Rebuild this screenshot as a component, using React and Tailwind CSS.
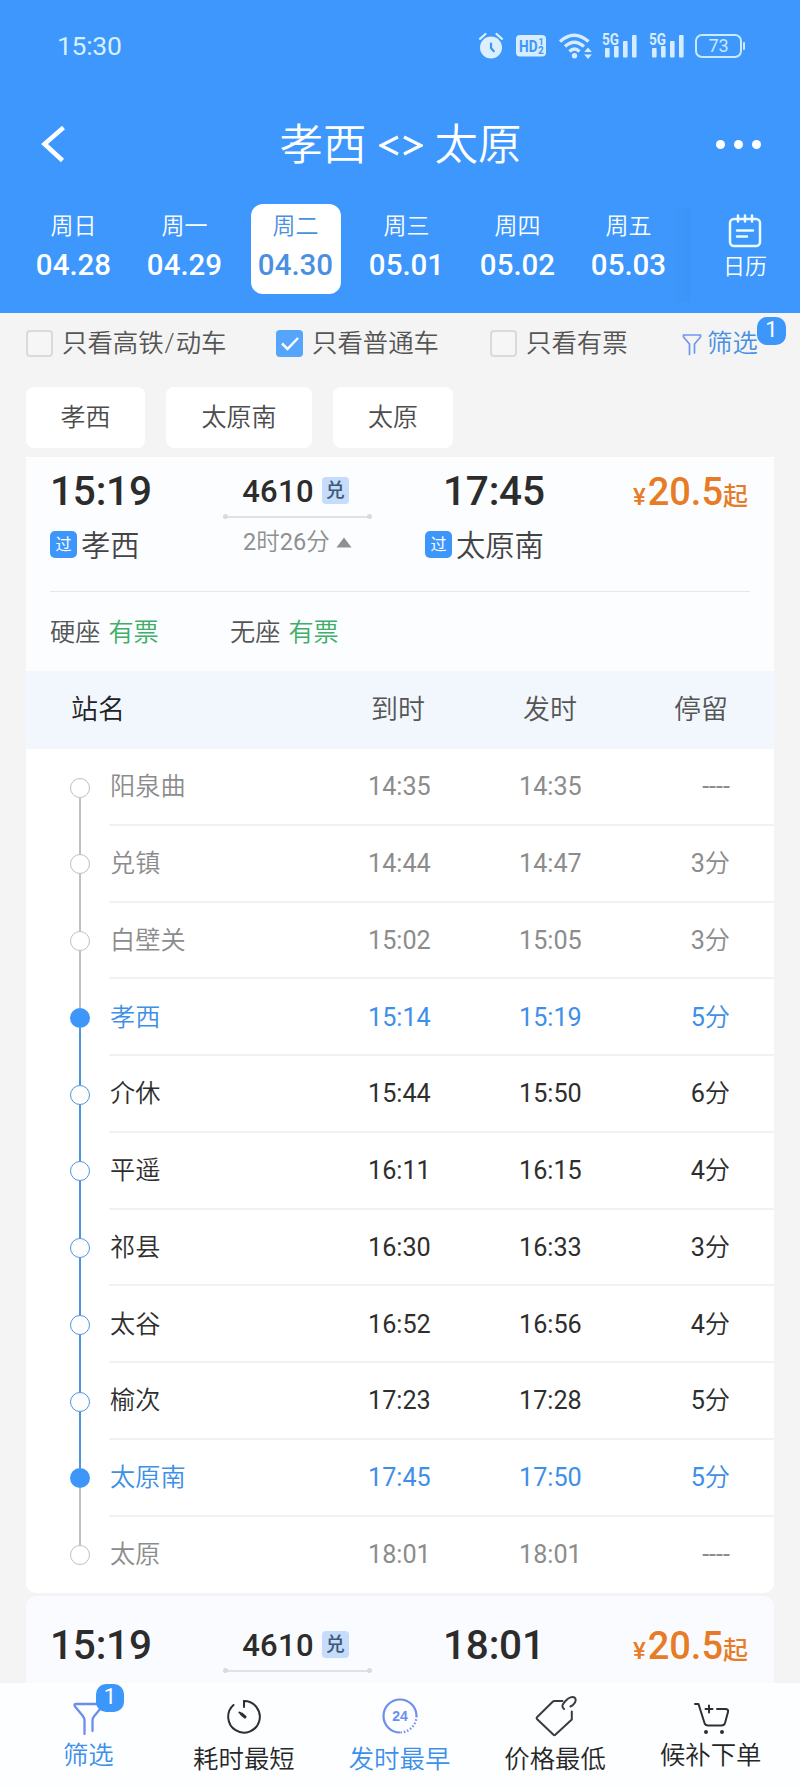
import clsx from 'clsx';

const days = [
  { week: '周日', date: '04.28' },
  { week: '周一', date: '04.29' },
  { week: '周二', date: '04.30', active: true },
  { week: '周三', date: '05.01' },
  { week: '周四', date: '05.02' },
  { week: '周五', date: '05.03' },
];

const stops = [
  { name: '阳泉曲', arrive: '14:35', depart: '14:35', stay: '----', state: 'out' },
  { name: '兑镇', arrive: '14:44', depart: '14:47', stay: '3分', state: 'out' },
  { name: '白壁关', arrive: '15:02', depart: '15:05', stay: '3分', state: 'out' },
  { name: '孝西', arrive: '15:14', depart: '15:19', stay: '5分', state: 'end' },
  { name: '介休', arrive: '15:44', depart: '15:50', stay: '6分', state: 'mid' },
  { name: '平遥', arrive: '16:11', depart: '16:15', stay: '4分', state: 'mid' },
  { name: '祁县', arrive: '16:30', depart: '16:33', stay: '3分', state: 'mid' },
  { name: '太谷', arrive: '16:52', depart: '16:56', stay: '4分', state: 'mid' },
  { name: '榆次', arrive: '17:23', depart: '17:28', stay: '5分', state: 'mid' },
  { name: '太原南', arrive: '17:45', depart: '17:50', stay: '5分', state: 'end' },
  { name: '太原', arrive: '18:01', depart: '18:01', stay: '----', state: 'out' },
];

const Signal = () => (
  <svg width="36" height="38" viewBox="0 -6 36 38" fill="#d6edff">
    <text x="0" y="12" fontSize="16" fontWeight="700" fontFamily="Roboto" textLength="17" lengthAdjust="spacingAndGlyphs">5G</text>
    <rect x="3" y="15" width="4.6" height="9.5" rx="1" />
    <rect x="12" y="13" width="4.6" height="11.5" rx="1" />
    <rect x="21" y="8" width="4.6" height="16.5" rx="1" />
    <rect x="30" y="2" width="4.6" height="22.5" rx="1" />
  </svg>
);

const StatusBar = () => (
  <div className="flex h-[92px] items-center pl-[57px] pr-[55px]">
    <span className="flex-1 text-[26.5px] leading-none tracking-[-0.3px] text-[#d6f0ff]">15:30</span>
    <svg width="26" height="28" viewBox="0 0 26 28" fill="none">
      <circle cx="13" cy="15.5" r="11" fill="#dcefff" />
      <path d="M2 6.8 7.5 2M24 6.8 18.5 2" stroke="#dcefff" strokeWidth="2.2" strokeLinecap="round" />
      <path d="M13 11.5v4.5l2.8 3.2" stroke="#3d97fb" strokeWidth="2.2" strokeLinecap="round" strokeLinejoin="round" />
    </svg>
    <svg className="ml-[12px]" width="30" height="22" viewBox="0 0 30 22">
      <rect width="30" height="21.5" rx="4" fill="#d6edff" />
      <text x="3" y="16.5" fontSize="16.5" fontWeight="700" fontFamily="Roboto" fill="#3d97fb" textLength="18.5" lengthAdjust="spacingAndGlyphs">HD</text>
      <text x="22.5" y="10" fontSize="9" fontWeight="700" fontFamily="Roboto" fill="#3d97fb">1</text>
      <text x="22" y="18.8" fontSize="10" fontWeight="700" fontFamily="Roboto" fill="#3d97fb">2</text>
    </svg>
    <svg className="ml-[13px]" width="34" height="27" viewBox="0 0 34 27" fill="none" stroke="#d6edff" strokeWidth="3.3">
      <path d="M1 8.500Q15 -4 29.500 8.500" />
      <path d="M6 13.500Q15 5 25 13.500" />
      <path d="M10.500 18.500Q15.500 13.500 20.500 18.500" />
      <circle cx="15.5" cy="22.8" r="2.7" fill="#d6edff" stroke="none" />
      <path d="m29 14.500 3.800 4.500h-7.600zM29 26l3.800-4.500h-7.600z" fill="#d6edff" stroke="none" />
    </svg>
    <div className="ml-[9px] flex gap-[11px]">
      <Signal />
      <Signal />
    </div>
    <div className="ml-[10px] flex h-[24px] w-[47px] items-center justify-center rounded-[7px] border-2 border-[#c9eaff] text-[18px] leading-none text-[#c9eaff]">73</div>
    <span className="ml-[1px] h-[8px] w-[2px] rounded-full bg-[#c9eaff]" />
  </div>
);

const Header = () => (
  <header className="h-[313px] bg-[#3d97fc] text-white">
    <StatusBar />
    <div className="flex h-[106px] items-center pl-[41px] pr-[39px]">
      <svg width="26" height="38" viewBox="0 0 26 38" fill="none" stroke="white" strokeWidth="4.5">
        <path d="M22.500 1.500 3.500 18l18 16.500" />
      </svg>
      <h1 className="flex flex-1 items-center justify-center gap-[12px] pl-[18px] pt-[2px] text-[43.5px] font-[350] leading-none">
        <span>孝西</span>
        <svg width="44" height="22" viewBox="0 0 44 22" fill="none" stroke="white" strokeWidth="3.2">
          <path d="M19 2 2 10.500 19 19M25 2l17 8.500L25 19" />
        </svg>
        <span>太原</span>
      </h1>
      <div className="flex gap-[9px] pb-[2px]">
        <i className="size-[9px] rounded-full bg-white" />
        <i className="size-[9px] rounded-full bg-white" />
        <i className="size-[9px] rounded-full bg-white" />
      </div>
    </div>
    <div className="flex h-[115px] pl-[18px]">
      {days.map((d) => (
        <div key={d.date} className="flex w-[111px] justify-center pt-[6px]">
          <div className={clsx('flex h-[90px] w-[90px] flex-col items-center rounded-[12px] pt-[10px]', d.active && 'bg-white text-[#4a90e2]')}>
            <span className="text-[23px] font-[350] leading-[26px]">{d.week}</span>
            <span className="mt-[9px] text-[29.5px] font-medium leading-[32px]">{d.date}</span>
          </div>
        </div>
      ))}
      <div className="-ml-[10px] mt-[10px] h-[94px] w-[16px] bg-gradient-to-r from-[#3d97fc] to-[#3c94f7]" />
      <div className="flex flex-1 flex-col items-center pt-[16px]">
        <svg className="shrink-0" width="34" height="34" viewBox="0 0 34 34" fill="none" stroke="#ecfcff" strokeWidth="2.5" strokeLinecap="round">
          <rect x="2" y="5" width="30" height="27" rx="4" />
          <path d="M10 1.500v6M17 1.500v6M24 1.500v6M9 16.500h16M9 22.500h10" />
        </svg>
        <span className="mt-[6px] text-[22px] font-[350] leading-[26px]">日历</span>
      </div>
    </div>
  </header>
);

const Check = ({ checked }) => (
  <span className={clsx('-mt-[1px] flex size-[27px] shrink-0 items-center justify-center rounded-[4px]', checked ? 'bg-[#54a5fb]' : 'border-2 border-[#dadada] bg-[#f6f6f6]')}>
    {checked && (
      <svg width="20" height="16" viewBox="0 0 20 16" fill="none" stroke="white" strokeWidth="2.5">
        <path d="m2 7.500 5.500 5.500L18 2" />
      </svg>
    )}
  </span>
);

const Filters = () => (
  <div className="relative flex h-[60px] items-center pl-[26px] pt-[2px] text-[25.4px] font-[350] leading-none text-[#555]">
    <div className="flex w-[250px] items-center gap-[9px]">
      <Check />
      <span>只看高铁<span className="px-[1px]">/</span>动车</span>
    </div>
    <div className="flex w-[214px] items-center gap-[9px]"><Check checked />只看普通车</div>
    <div className="flex w-[192px] items-center gap-[9px]"><Check />只看有票</div>
    <div className="flex items-center gap-[5px] text-[#4a90e2]">
      <svg width="20" height="23" viewBox="0 0 20 23" fill="none" stroke="#6f96ee" strokeWidth="1.7" strokeLinecap="round">
        <path d="M7.500 21.500V11L1.500 4V2h17v2l-6 7v9" />
      </svg>
      筛选
    </div>
    <span className="absolute left-[757px] top-[4px] flex h-[28px] w-[29px] items-center justify-center rounded-[10px] bg-[#3d97fb] pb-[2px] text-[22px] font-normal text-white">1</span>
  </div>
);

const Tag = () => (
  <span className="-mt-[3px] flex size-[27px] shrink-0 items-center justify-center rounded-[5px] bg-[#3d97fb] text-[16px] font-normal leading-none text-white">过</span>
);

const Summary = ({ depart, arrive }) => (
  <div className="flex h-[62px] pl-[24px] pr-[26px] font-medium text-[#2c2c2c]">
    <span className="w-[171px] pt-[10px] text-[40.5px] leading-[48px] tracking-[-0.2px]">{depart}</span>
    <div className="flex w-[152px] flex-col items-center">
      <div className="flex h-[58px] items-center gap-[8px] pr-[3px] pt-[9px]">
        <span className="pt-[3px] text-[31px] leading-none tracking-[0.3px]">4610</span>
        <span className="flex size-[27px] items-center justify-center rounded-[4px] bg-[#c5dcfb] text-[19px] leading-none text-[#3e5878]">兑</span>
      </div>
      <div className="flex w-[149px] shrink-0 items-center">
        <i className="size-[5px] rounded-full bg-[#d8dadd]" />
        <i className="h-[2px] flex-1 bg-[#dfe1e4]" />
        <i className="size-[5px] rounded-full bg-[#d8dadd]" />
      </div>
    </div>
    <span className="flex-1 pl-[70px] pt-[10px] text-[40.5px] leading-[48px] tracking-[-0.2px]">{arrive}</span>
    <div className="flex items-baseline pt-[11px] text-[38px] leading-[48px] text-[#e87b25]">
      <span className="pr-[2px] text-[24px]">¥</span>20.5<span className="text-[25px]">起</span>
    </div>
  </div>
);

const tone = { out: 'text-[#8c8c8c]', end: 'text-[#3d8fe8]', mid: 'text-[#2e2e2e]' };

const Stop = ({ stop, index }) => {
  const last = index === stops.length - 1;
  const onRoute = index >= 3 && index < 9;
  const cameFromRoute = index > 3 && index <= 9;
  return (
    <div className={clsx('flex h-[76.75px] text-[25.2px] leading-none', tone[stop.state])}>
      <div className="flex w-[83px] flex-col items-center pl-[25px]">
        <i className={clsx('h-[28.5px] w-[2px] shrink-0', index === 0 ? 'bg-transparent' : cameFromRoute ? 'bg-[#4b96df]' : 'bg-[#bfbfbf]')} />
        <i
          className={clsx(
            'size-[20px] shrink-0 rounded-full',
            stop.state === 'end' && 'bg-[#3d97fb]',
            stop.state === 'mid' && 'border-[1.5px] border-[#4b96df] bg-white',
            stop.state === 'out' && 'border-[1.5px] border-[#bfbfbf] bg-white'
          )}
        />
        <i className={clsx('w-[2px] flex-1', last ? 'bg-transparent' : onRoute ? 'bg-[#4b96df]' : 'bg-[#bfbfbf]')} />
      </div>
      <div className={clsx('flex flex-1 items-center', last ? 'pb-[1px]' : 'border-b-2 border-[#f1f1f1] pt-[1px]')}>
        <span className="w-[259px] pl-[1px] font-[350]">{stop.name}</span>
        <span className="w-[151px]">{stop.arrive}</span>
        <span className="w-[111px]">{stop.depart}</span>
        <span className="flex-1 pr-[44px] text-right">
          {stop.stay.replace('分', '')}
          {stop.stay.includes('分') && <span className="font-[350]">分</span>}
        </span>
      </div>
    </div>
  );
};

const TrainCard = () => (
  <section className="mt-[9px] rounded-b-[10px] bg-white">
    <div className="h-[214px] rounded-t-[6px] bg-[#fcfdff]">
      <Summary depart="15:19" arrive="17:45" />
      <div className="flex h-[72px] pl-[24px] pt-[11px] text-[29.3px] font-[350] leading-[32px] text-[#444]">
        <div className="flex h-[32px] w-[171px] items-center gap-[4px]"><Tag />孝西</div>
        <div className="flex h-[24px] w-[204px] items-center pl-[22px] text-[23.5px] text-[#8f8f8f]">
          <span><span className="font-normal">2</span>时<span className="font-normal">26</span>分</span>
          <svg className="ml-[6px]" width="16" height="11" viewBox="0 0 16 11" fill="#8f8f8f">
            <path d="M8 0.500 15.500 10.500H.5z" />
          </svg>
        </div>
        <div className="flex h-[32px] items-center gap-[4px]"><Tag />太原南</div>
      </div>
      <div className="mx-[24px] h-px bg-[#e6e8ec]" />
      <div className="flex h-[80px] items-center pl-[24px] pt-[2px] text-[25.2px] font-[350] leading-none text-[#555]">
        <span className="w-[180px]">硬座<span className="ml-[8px] text-[#3fae68]">有票</span></span>
        <span>无座<span className="ml-[8px] text-[#3fae68]">有票</span></span>
      </div>
    </div>
    <div className="flex h-[78px] items-center bg-[#f2f7fe] pl-[45px] text-[27px] font-[350] leading-none text-[#555]">
      <span className="w-[300px] text-[#222]">站名</span>
      <span className="w-[152px]">到时</span>
      <span className="w-[151px]">发时</span>
      <span>停留</span>
    </div>
    {stops.map((s, i) => <Stop key={s.name} stop={s} index={i} />)}
  </section>
);

const tabs = [
  {
    label: '筛选',
    badge: '1',
    color: 'text-[#3d90ea]',
    pad: 'pt-[18px]',
    icon: (
      <svg width="34" height="35" viewBox="0 0 34 35" fill="none" stroke="#6c8df0" strokeWidth="2.3" strokeLinecap="round" strokeLinejoin="round">
        <path d="M12.500 33V19c0-1.500-.6-2.500-1.600-4L3 5.500C2 4.200 2.500 3 4 3h25c1.800 0 2.300 1.200 1.200 2.500L22.300 15c-1.200 1.500-1.800 2.500-1.800 4v11" />
      </svg>
    ),
    gap: 'mt-[5px]',
  },
  {
    label: '耗时最短',
    color: 'text-[#262626]',
    pad: 'pt-[14px]',
    icon: (
      <svg width="36" height="38" viewBox="0 0 36 38" fill="none" stroke="#2f2f2f" strokeWidth="2" strokeLinecap="round">
        <path d="M18 10V4a15.800 15.800 0 1 1-10.500 4M13.500 15.500l5.500 4.500" />
        <path d="m15.500 17 3.500 3" strokeWidth="3" />
      </svg>
    ),
    gap: 'mt-[10px]',
  },
  {
    label: '发时最早',
    color: 'text-[#3d90ea]',
    pad: 'pt-[14px]',
    icon: (
      <svg width="38" height="38" viewBox="0 0 38 38" fill="none" stroke="#6c8df0" strokeWidth="2.2">
        <path d="M19 35.500A16.500 16.500 0 1 1 35.500 19" />
        <path d="M35.500 19A16.500 16.500 0 0 1 19 35.500" strokeDasharray="1.5 1.9" />
        <text x="19" y="24" fontSize="14" fontWeight="700" fontFamily="Liberation Sans" textAnchor="middle" fill="#6c8df0" stroke="none">24</text>
      </svg>
    ),
    gap: 'mt-[10px]',
  },
  {
    label: '价格最低',
    color: 'text-[#262626]',
    pad: 'pt-[12px]',
    icon: (
      <svg width="42" height="42" viewBox="0 0 42 42" fill="none" stroke="#3c3c3c" strokeWidth="2" strokeLinecap="round" strokeLinejoin="round">
        <path d="M27.500 6H19.500c-.8 0-1.300.3-1.800.8L2.200 22c-.8.800-.8 1.400 0 2.200L18.500 39.800c.6.600 1.200.6 1.800 0L36.800 24.500V16.500" />
        <path d="M29 14c-3.500-3-.5-6 2-8.500S37.500 .5 40 3c2 3-1 7-4.500 8.500" />
      </svg>
    ),
    gap: 'mt-[8px]',
  },
  {
    label: '候补下单',
    color: 'text-[#262626]',
    pad: 'pt-[18px]',
    icon: (
      <svg width="38" height="36" viewBox="0 0 38 36" fill="none" stroke="#303030" strokeWidth="2" strokeLinecap="round" strokeLinejoin="round">
        <path d="M3 3h3.500l6 19c.6 1.800 1.500 2.500 3.500 2.500h13.500c2 0 3-1 3.500-2.500l3-11c.5-2-.5-3-2.500-3H25M13.500 8h7M17 4.500v7" />
        <circle cx="14" cy="31" r="2" fill="#303030" stroke="none" />
        <circle cx="30" cy="31" r="2" fill="#303030" stroke="none" />
      </svg>
    ),
    gap: 'mt-[4px]',
  },
];

const TabBar = () => (
  <nav className="flex h-[104px] bg-[#fdfeff] px-[11px]">
    {tabs.map((t) => (
      <div key={t.label} className={clsx('relative flex flex-1 flex-col items-center', t.pad, t.color)}>
        {t.icon}
        <span className={clsx('-ml-[1px] text-[25.4px] font-[350] leading-[28px]', t.gap)}>{t.label}</span>
        {t.badge && (
          <span className="absolute left-[85px] top-[1px] flex h-[28px] w-[28px] items-center justify-center rounded-[10px] bg-[#3d97fb] pb-[2px] text-[22px] leading-none text-white">{t.badge}</span>
        )}
      </div>
    ))}
  </nav>
);

export default function App() {
  return (
    <div className="flex h-[1787px] w-[800px] flex-col overflow-hidden bg-[#f4f4f4] font-['Roboto','Noto_Sans_CJK_SC',sans-serif]">
      <Header />
      <Filters />
      <div className="flex gap-[21px] px-[26px] pt-[14px] text-[25px] font-[350] leading-none text-[#4c4c4c]">
        <span className="flex h-[61px] w-[119px] items-center justify-center rounded-[8px] bg-white">孝西</span>
        <span className="flex h-[61px] w-[146px] items-center justify-center rounded-[8px] bg-white">太原南</span>
        <span className="flex h-[61px] w-[120px] items-center justify-center rounded-[8px] bg-white">太原</span>
      </div>
      <main className="flex-1 overflow-hidden pl-[26px] pr-[26px]">
        <TrainCard />
        <section className="mt-[3px] h-[120px] rounded-t-[10px] bg-[#fafbfe] pt-[15px]">
          <Summary depart="15:19" arrive="18:01" />
        </section>
      </main>
      <TabBar />
    </div>
  );
}
